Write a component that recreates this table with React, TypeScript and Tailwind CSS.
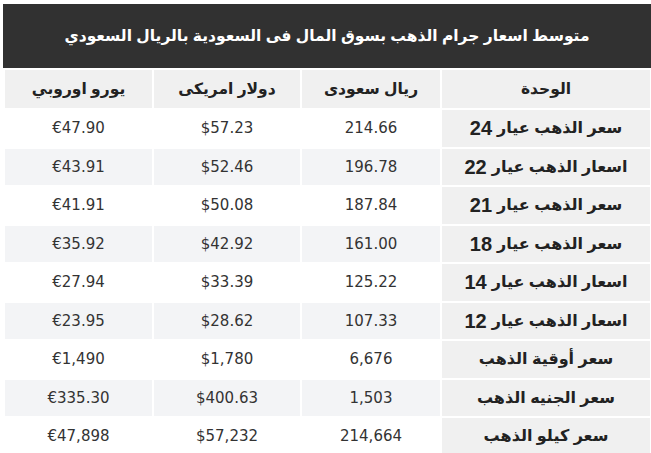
import React from "react";

const rows: [string, string, string, string, string][] = [
  ["سعر الذهب عيار", "24", "214.66", "$57.23", "€47.90"],
  ["اسعار الذهب عيار", "22", "196.78", "$52.46", "€43.91"],
  ["سعر الذهب عيار", "21", "187.84", "$50.08", "€41.91"],
  ["سعر الذهب عيار", "18", "161.00", "$42.92", "€35.92"],
  ["اسعار الذهب عيار", "14", "125.22", "$33.39", "€27.94"],
  ["اسعار الذهب عيار", "12", "107.33", "$28.62", "€23.95"],
  ["سعر أوقية الذهب", "", "6,676", "$1,780", "€1,490"],
  ["سعر الجنيه الذهب", "", "1,503", "$400.63", "€335.30"],
  ["سعر كيلو الذهب", "", "214,664", "$57,232", "€47,898"],
];

const arabic = "font-['Arial','DejaVu_Sans',sans-serif]";
const num = "font-['DejaVu_Sans',sans-serif]";

export default function App() {
  return (
    <div className="w-[651px] h-[453px] overflow-hidden bg-white pt-[4px] pl-[3px]">
      <div
        dir="rtl"
        className={`h-[64px] w-[648px] bg-[#313131] flex items-center justify-center text-white font-bold text-[15.5px] ${arabic}`}
      >
        متوسط اسعار جرام الذهب بسوق المال فى السعودية بالريال السعودي
      </div>
      <div
        dir="rtl"
        className="grid grid-cols-[208px_138px_146px_147px] gap-[2px] p-[2px] w-[649px]"
      >
        {["الوحدة", "ريال سعودى", "دولار امريكى", "يورو اوروبي"].map((h) => (
          <div
            key={h}
            className={`h-[38px] bg-[#f0f0f0] flex items-center justify-center font-bold text-[15.5px] text-[#222] ${arabic}`}
          >
            {h}
          </div>
        ))}
        {rows.map(([label, n, sar, usd, eur], i) => {
          const bg = i % 2 === 1 ? "bg-[#f3f4f6]" : "bg-white";
          return (
            <React.Fragment key={i}>
              <div
                className={`h-[36.5px] bg-[#f0f0f0] flex items-center justify-center gap-[5px] font-bold text-[16px] text-[#222] ${arabic}`}
              >
                <span>{label}</span>
                {n && (
                  <span className="text-[20px] font-['Liberation_Sans',sans-serif] font-bold">
                    {n}
                  </span>
                )}
              </div>
              {[sar, usd, eur].map((v, j) => (
                <div
                  key={j}
                  dir="ltr"
                  className={`h-[36.5px] ${bg} flex items-center justify-center text-[15px] text-[#333] ${num}`}
                >
                  {v}
                </div>
              ))}
            </React.Fragment>
          );
        })}
      </div>
    </div>
  );
}
